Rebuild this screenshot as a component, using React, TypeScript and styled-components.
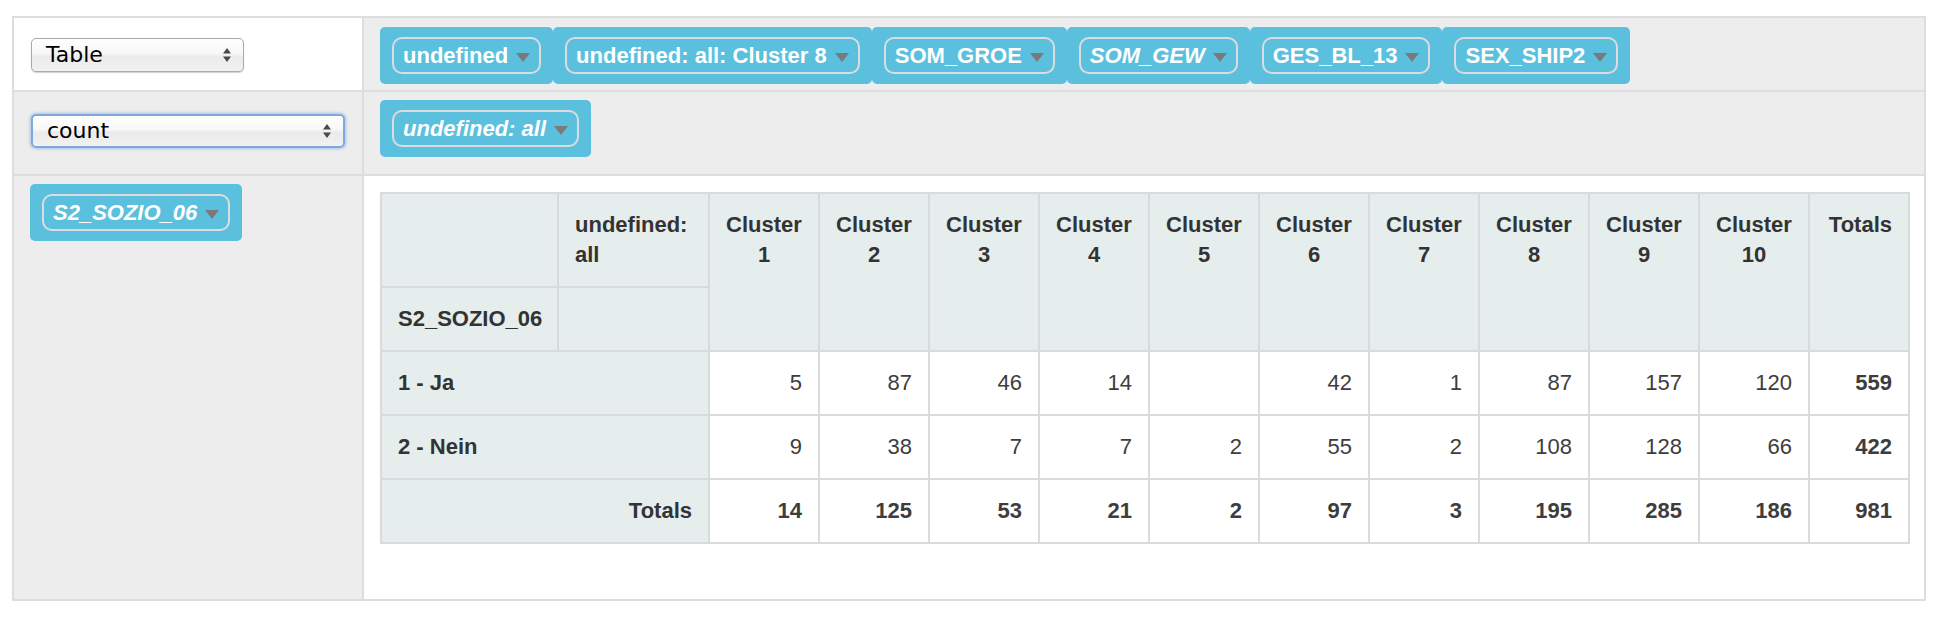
import { FC } from 'react';
import styled, { createGlobalStyle } from 'styled-components';

interface Attr {
  name: string;
  filtered?: boolean;
}

const unusedAttrs: Attr[] = [
  { name: 'undefined' },
  { name: 'undefined: all: Cluster 8' },
  { name: 'SOM_GROE' },
  { name: 'SOM_GEW', filtered: true },
  { name: 'GES_BL_13' },
  { name: 'SEX_SHIP2' },
];

const colAttr: Attr = { name: 'undefined: all', filtered: true };
const rowAttr: Attr = { name: 'S2_SOZIO_06', filtered: true };

const clusters = ['1', '2', '3', '4', '5', '6', '7', '8', '9', '10'];

const rows = [
  { label: '1 - Ja', values: [5, 87, 46, 14, null, 42, 1, 87, 157, 120], total: 559 },
  { label: '2 - Nein', values: [9, 38, 7, 7, 2, 55, 2, 108, 128, 66], total: 422 },
];

const colTotals = [14, 125, 53, 21, 2, 97, 3, 195, 285, 186];
const grandTotal = 981;

const GlobalStyle = createGlobalStyle`
  body {
    margin: 0;
    padding: 16px 0 0 12px;
    background: #fff;
    font-family: 'Liberation Sans', Arial, sans-serif;
  }
`;

const ArrowsIcon: FC = () => (
  <svg width='10' height='16' viewBox='0 0 10 16'>
    <path d='M1 6.5 L5 1 L9 6.5 Z' fill='#4a4a4a' />
    <path d='M1 9.5 L5 15 L9 9.5 Z' fill='#4a4a4a' />
  </svg>
);

const Select: FC<{ value: string; focused?: boolean; wide?: boolean }> = ({ value, focused, wide }) => (
  <SelectBox $focused={focused} $wide={wide}>
    <SelectText>{value}</SelectText>
    <ArrowsIcon />
  </SelectBox>
);

const AttrChip: FC<{ attr: Attr }> = ({ attr }) => (
  <AttrItem>
    <AttrPill $italic={attr.filtered}>
      {attr.name}
      <Caret />
    </AttrPill>
  </AttrItem>
);

const PivotTable: FC = () => (
  <PvtTable>
    <colgroup>
      <col style={{ width: 177 }} />
      <col style={{ width: 151 }} />
      {clusters.map((c) => (
        <col key={c} style={{ width: 110 }} />
      ))}
      <col style={{ width: 100 }} />
    </colgroup>
    <thead>
      <tr>
        <HeadCell />
        <HeadCell $align='left'>{colAttr.name}</HeadCell>
        {clusters.map((c) => (
          <HeadCell key={c} rowSpan={2} $align='center' $narrow>
            Cluster {c}
          </HeadCell>
        ))}
        <HeadCell rowSpan={2} $align='right'>Totals</HeadCell>
      </tr>
      <tr>
        <HeadCell $align='left'>{rowAttr.name}</HeadCell>
        <HeadCell />
      </tr>
    </thead>
    <tbody>
      {rows.map((r) => (
        <tr key={r.label}>
          <HeadCell colSpan={2} $align='left'>{r.label}</HeadCell>
          {r.values.map((v, i) => (
            <DataCell key={i}>{v ?? ''}</DataCell>
          ))}
          <DataCell $bold>{r.total}</DataCell>
        </tr>
      ))}
      <tr>
        <HeadCell colSpan={2} $align='right'>Totals</HeadCell>
        {colTotals.map((v, i) => (
          <DataCell key={i} $bold>{v}</DataCell>
        ))}
        <DataCell $bold>{grandTotal}</DataCell>
      </tr>
    </tbody>
  </PvtTable>
);

const App: FC = () => (
  <>
    <GlobalStyle />
    <UiTable>
      <colgroup>
        <col style={{ width: 350 }} />
        <col />
      </colgroup>
      <tbody>
        <tr>
          <ControlCell $pad='20px 17px 18px'>
            <Select value='Table' />
          </ControlCell>
          <AxisCell $gray $pad='9px 16px 4px'>
            <ChipList>
              {unusedAttrs.map((a) => (
                <AttrChip key={a.name} attr={a} />
              ))}
            </ChipList>
          </AxisCell>
        </tr>
        <tr>
          <ControlCell $gray $pad='22px 17px 26px'>
            <Select value='count' focused wide />
          </ControlCell>
          <AxisCell $gray>
            <ChipList>
              <AttrChip attr={colAttr} />
            </ChipList>
          </AxisCell>
        </tr>
        <tr>
          <AxisCell $gray>
            <ChipList>
              <AttrChip attr={rowAttr} />
            </ChipList>
          </AxisCell>
          <RendererArea>
            <PivotTable />
          </RendererArea>
        </tr>
      </tbody>
    </UiTable>
  </>
);

const UiTable = styled.table`
  width: 1914px;
  table-layout: fixed;
  border-collapse: collapse;
  border: 2px solid #dddddd;
`;

const ControlCell = styled.td<{ $gray?: boolean; $pad: string }>`
  border: 2px solid #dddddd;
  background: ${({ $gray }) => ($gray ? '#ededed' : '#ffffff')};
  padding: ${({ $pad }) => $pad};
  vertical-align: top;
`;

const AxisCell = styled.td<{ $gray?: boolean; $pad?: string }>`
  border: 2px solid #dddddd;
  background: ${({ $gray }) => ($gray ? '#ededed' : '#ffffff')};
  padding: ${({ $pad }) => $pad ?? '8px 16px'};
  vertical-align: top;
`;

const RendererArea = styled.td`
  border: 2px solid #dddddd;
  background: #ffffff;
  padding: 16px 16px 55px;
  vertical-align: top;
`;

const SelectBox = styled.div<{ $focused?: boolean; $wide?: boolean }>`
  box-sizing: border-box;
  display: flex;
  align-items: center;
  width: ${({ $wide }) => ($wide ? '100%' : '213px')};
  height: 34px;
  padding: 0 11px 0 14px;
  border: ${({ $focused }) => ($focused ? '2px solid #7fa9dc' : '1px solid #a9a9a9')};
  border-radius: 5px;
  background: linear-gradient(to bottom, #ffffff 0%, #f7f7f7 45%, #ebebeb 55%, #f1f1f1 100%);
  box-shadow: ${({ $focused }) =>
    $focused ? '0 0 3px 1px rgba(110, 160, 225, 0.55)' : '0 1px 1px rgba(0, 0, 0, 0.18)'};
`;

const SelectText = styled.span`
  flex: 1;
  font-family: 'DejaVu Sans', Verdana, sans-serif;
  font-size: 22px;
  color: #000;
  line-height: 26px;
`;

const ChipList = styled.ul`
  display: flex;
  flex-wrap: wrap;
  margin: 0;
  padding: 0;
  list-style: none;
`;

const AttrItem = styled.li`
  background: #5bc0de;
  padding: 10px 12px;
  border-radius: 5px;
`;

const AttrPill = styled.span<{ $italic?: boolean }>`
  display: inline-flex;
  align-items: center;
  gap: 8px;
  padding: 4px 9px;
  border: 2px solid #dcdcdc;
  border-radius: 10px;
  color: #ffffff;
  font-size: 22px;
  font-weight: bold;
  font-style: ${({ $italic }) => ($italic ? 'italic' : 'normal')};
  line-height: 25px;
  white-space: nowrap;
`;

const Caret = styled.span`
  width: 0;
  height: 0;
  margin-top: 4px;
  border-left: 7px solid transparent;
  border-right: 7px solid transparent;
  border-top: 9px solid #7a7a7a;
`;

const PvtTable = styled.table`
  width: 1528px;
  table-layout: fixed;
  border-collapse: collapse;
  font-size: 22px;
  line-height: 30px;
`;

const HeadCell = styled.th<{ $align?: 'left' | 'center' | 'right'; $narrow?: boolean }>`
  background: #e6eded;
  border: 2px solid #dadada;
  padding: ${({ $narrow }) => ($narrow ? '16px 8px' : '16px')};
  color: #333333;
  font-weight: bold;
  text-align: ${({ $align }) => $align ?? 'left'};
  vertical-align: top;
`;

const DataCell = styled.td<{ $bold?: boolean }>`
  background: #ffffff;
  border: 2px solid #dadada;
  padding: 16px;
  color: #3d3d3d;
  font-weight: ${({ $bold }) => ($bold ? 'bold' : 'normal')};
  text-align: right;
  vertical-align: top;
`;

export default App;
